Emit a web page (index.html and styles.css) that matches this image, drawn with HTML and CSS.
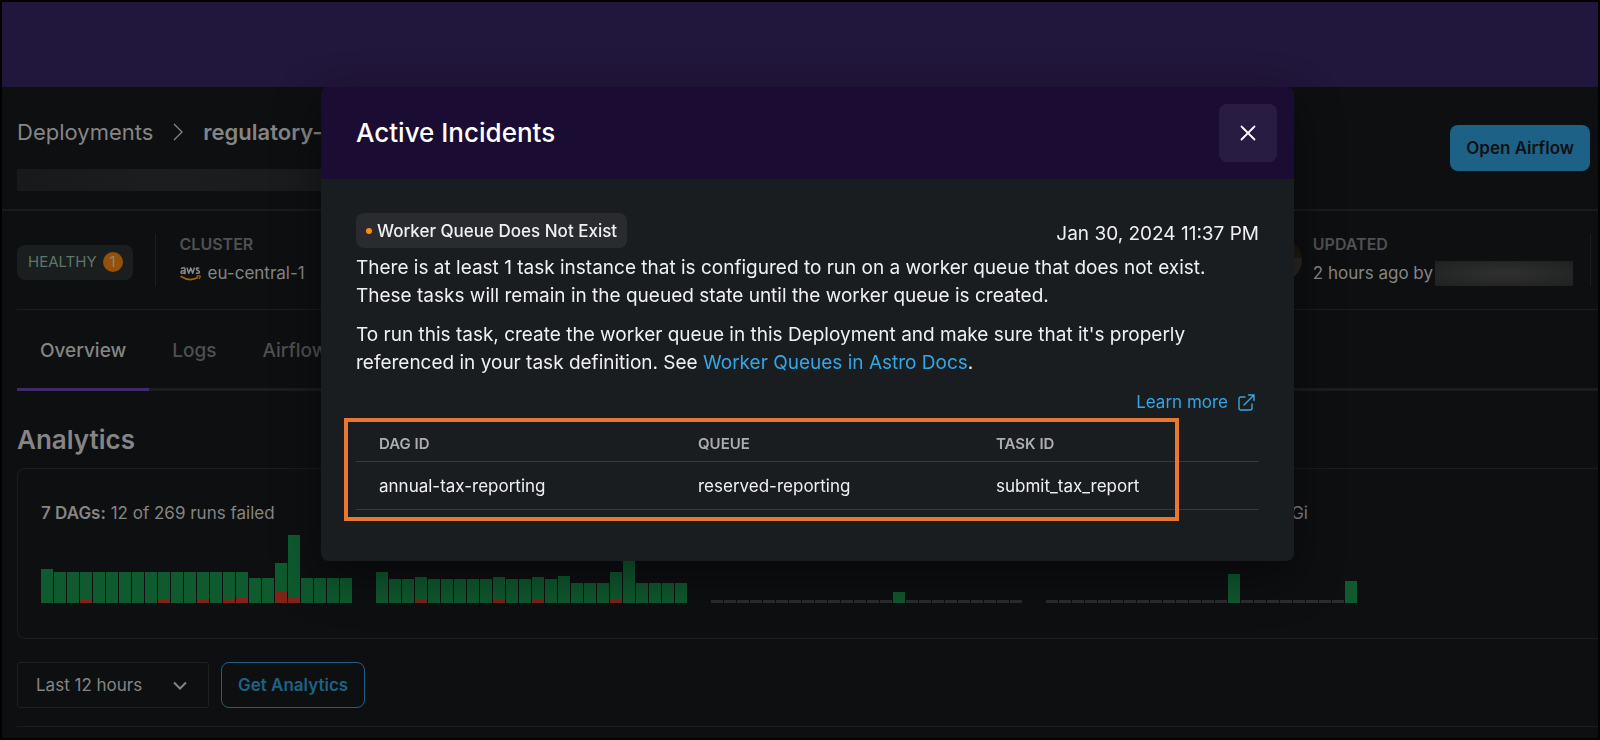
FILE: index.html
```html
<!DOCTYPE html>
<html lang="en">
<head>
<meta charset="utf-8">
<title>Deployment – Active Incidents</title>
<link rel="stylesheet" href="styles.css">
</head>
<body>
<div class="page">
  <header class="topbar"></header>
  <main class="content">
    <section class="heading">
      <div>
        <nav class="breadcrumb">
          <a href="#">Deployments</a>
          <svg width="10" height="18" viewBox="0 0 10 18" fill="none" stroke="currentColor" stroke-width="1.300"><path d="M1 1l8 8-8 8"/></svg>
          <strong>regulatory-reporting</strong>
        </nav>
        <div class="redacted redacted-id"></div>
      </div>
      <button class="btn btn-solid">Open Airflow</button>
    </section>

    <section class="facts">
      <div class="health">HEALTHY <span class="count">1</span></div>
      <div class="fact cluster">
        <div class="label">CLUSTER</div>
        <div class="value">
          <svg class="aws" width="21" height="15" viewBox="0 0 21 15" fill="none">
            <g stroke="#8a8a8a" stroke-width="1.500" stroke-linejoin="round">
              <path d="M1 2.600Q4.900 .8 5 3.200V8.200M5 4.800Q1 4.200 1 6.300Q1.400 8.400 5 6.400"/>
              <path d="M7 1.600L8.700 7.300L10.700 2L12.700 7.300L14.400 1.600"/>
              <path d="M19.300 2.400Q16.300 1.400 16.300 3.100C16.300 4.700 19.500 4.400 19.500 6Q19.300 8 16 7"/>
            </g>
            <path d="M.5 10.300Q9.500 16 18 11.600" stroke="#a06012" stroke-width="1.700"/>
            <path d="M16.500 10.300Q21 9 20.300 10.600T19 13" stroke="#a06012" stroke-width="1.200"/>
          </svg>
          eu-central-1
        </div>
      </div>
      <div class="fact updated">
        <div class="avatar"></div>
        <div>
          <div class="label">UPDATED</div>
          <div class="value">2 hours ago by <span class="redacted redacted-user"></span></div>
        </div>
      </div>
    </section>

    <nav class="tabs">
      <a class="tab active" href="#">Overview</a>
      <a class="tab" href="#">Logs</a>
      <a class="tab" href="#">Airflow</a>
    </nav>

    <h2 class="section-title">Analytics</h2>
    <section class="charts">
      <div class="chart"><p><b>7 DAGs:</b> 12 of 269 runs failed</p><div class="bars" data-series="dags"></div></div>
      <div class="chart"><p></p><div class="bars" data-series="tasks"></div></div>
      <div class="chart"><p></p><div class="bars" data-series="cpu"></div></div>
      <div class="chart"><p class="memory">Gi</p><div class="bars" data-series="memory"></div></div>
    </section>

    <div class="controls">
      <div class="select">
        <select aria-label="Time range"><option>Last 12 hours</option></select>
        <svg width="14" height="9" viewBox="0 0 14 9" fill="none" stroke="currentColor" stroke-width="2"><path d="M1 1.500l6 6 6-6"/></svg>
      </div>
      <button class="btn btn-outline">Get Analytics</button>
    </div>
    <hr class="rule">
  </main>
</div>

<div class="overlay">
  <div class="modal" role="dialog" aria-labelledby="modal-title">
    <header class="modal-head">
      <h1 id="modal-title">Active Incidents</h1>
      <button class="close" aria-label="Close">
        <svg width="16" height="16" viewBox="0 0 16 16" fill="none" stroke="currentColor" stroke-width="1.800" stroke-linecap="round"><path d="M1.500 1.500l13 13M14.500 1.500l-13 13"/></svg>
      </button>
    </header>
    <div class="modal-body">
      <div class="incident-head">
        <span class="badge"><i class="dot"></i>Worker Queue Does Not Exist</span>
        <time>Jan 30, 2024 11:37 PM</time>
      </div>
      <p>There is at least 1 task instance that is configured to run on a worker queue that does not exist. These tasks will remain in the queued state until the worker queue is created.</p>
      <p>To run this task, create the worker queue in this Deployment and make sure that it's properly referenced in your task definition. See <a href="#">Worker Queues in Astro Docs</a>.</p>
      <div class="more">
        <a href="#">Learn more
          <svg width="17" height="17" viewBox="0 0 17 17" fill="none" stroke="currentColor" stroke-width="1.400" stroke-linecap="round" stroke-linejoin="round"><path d="M7 3H3Q1 3 1 5v9Q1 16 3 16h9Q14 16 14 14v-4M6 11L16 1M10.500 1H16v5.500"/></svg>
        </a>
      </div>
      <div class="table-wrap">
        <table>
          <thead><tr><th class="col-dag">DAG ID</th><th class="col-queue">QUEUE</th><th>TASK ID</th></tr></thead>
          <tbody><tr><td>annual-tax-reporting</td><td>reserved-reporting</td><td>submit_tax_report</td></tr></tbody>
        </table>
        <div class="highlight"></div>
      </div>
    </div>
  </div>
</div>
<div class="frame"></div>
<script src="charts.js"></script>
</body>
</html>
```
FILE: styles.css
```css
* { box-sizing: border-box; }
body {
  margin: 0;
  min-height: 100vh;
  background: #0e0f11;
  color: #858585;
  font: 17px/24px Inter, "Liberation Sans", sans-serif;
  overflow: hidden;
}
h1, h2, p { margin: 0; }
a { color: inherit; text-decoration: none; }
button, select { font: inherit; color: inherit; }
svg { flex: none; }
.frame { position: fixed; inset: 0; border: 2px solid #000; pointer-events: none; }
.topbar { height: 87px; background: #21163b; }
.content { padding-left: 17px; }

.heading {
  display: flex;
  justify-content: space-between;
  align-items: flex-start;
  height: 124px;
  margin-left: -17px;
  padding: 31px 10px 0 17px;
  border-bottom: 2px solid #1a1b1c;
}
.breadcrumb { display: flex; align-items: center; gap: 20px; font-size: 22px; line-height: 28px; }
.breadcrumb strong { font-weight: 600; }
.redacted { background: #1b1c1e; }
.redacted-id { width: 340px; height: 22px; margin-top: 23px; background: linear-gradient(90deg, #18191b, #1c1d1f 40%, #1a1b1d); }
.btn { height: 46px; padding: 0 16px; border-radius: 8px; font-weight: 600; }
.btn-solid { margin-top: 7px; border: 0; background: #1d6286; color: #0e1113; }
.btn-outline { border: 1px solid #1d6286; background: none; color: #1d6286; }

.facts { display: flex; align-items: center; height: 99px; border-bottom: 1px solid #1c1d1e; }
.health {
  display: flex;
  align-items: center;
  gap: 6px;
  height: 35px;
  margin-top: 4px;
  padding: 0 10px 0 11px;
  border-radius: 8px;
  background: #1a1e1f;
  color: #5d776b;
  font-size: 15px;
}
.count {
  width: 20px;
  height: 20px;
  border-radius: 50%;
  background: #95500a;
  color: #8a8a70;
  line-height: 20px;
  text-align: center;
}
.fact { height: 52px; }
.cluster { margin-left: 22px; padding-left: 24px; border-left: 1px solid #1c1d1e; }
.label { height: 22px; line-height: 20px; color: #505152; font-size: 16px; font-weight: 600; }
.value { display: flex; align-items: center; gap: 7px; height: 34px; }
.updated { display: flex; gap: 11px; margin-left: auto; margin-right: 9px; padding-right: 17px; border-right: 1px solid #1c1d1e; }
.updated .value { gap: 2px; }
.avatar { width: 42px; height: 42px; margin-top: 5px; border-radius: 50%; background: linear-gradient(#1e1914 44%, #2f261c 46%, #292724 50%, #292724); }
.redacted-user { width: 138px; height: 25px; background: radial-gradient(#303030, #1f2020); }

.tabs { display: flex; height: 81px; border-bottom: 3px solid #1c1d1f; }
.tab { height: 81px; padding: 0 23px; color: #4e4f50; font-size: 19px; line-height: 82px; font-weight: 500; }
.tab.active { color: #858585; border-bottom: 3px solid #3f2b6b; }
.section-title { padding: 33px 0 12px; font-size: 26px; line-height: 32px; font-weight: 600; }

.charts {
  display: grid;
  grid-template-columns: repeat(4, 311px);
  gap: 24px;
  height: 171px;
  padding: 32px 0 0 23px;
  border: 1px solid #1c1d1e;
  border-right: 0;
  border-radius: 8px 0 0 8px;
}
.chart p { height: 24px; font-size: 17px; }
.chart b { font-weight: 600; }
.chart .memory { width: 262px; text-align: right; }
.bars { display: flex; align-items: flex-end; gap: 1px; height: 78px; }
.bar { flex: 1; display: flex; align-items: flex-end; background: #0f5a2f; }
.bar.empty { background: #2d2d2e; }
.failed { flex: 1; background: #812318; }

.controls { display: flex; gap: 12px; margin-top: 23px; }
.select { display: grid; width: 192px; align-items: center; }
.select select, .select svg { grid-area: 1 / 1; }
.select svg { justify-self: end; margin-right: 22px; pointer-events: none; }
.select select { appearance: none; height: 46px; padding: 0 18px; border: 1px solid #1f2021; border-radius: 3px; background: none; }
.rule { margin: 18px 0 0; border: 0; border-top: 1px solid #1c1d1e; }

.overlay { position: fixed; inset: 0; padding: 87px 0 0 15px; color: #f0f0f2; }
.modal {
  width: 973px;
  max-width: 100%;
  margin: 0 auto;
  border-radius: 8px;
  background: #1a1d1f;
  box-shadow: 0 16px 48px rgba(0, 0, 0, .45);
}
.modal-head {
  display: flex;
  align-items: center;
  justify-content: space-between;
  height: 92px;
  padding: 0 17px 0 35px;
  border-radius: 8px 8px 0 0;
  background: #1b0c34;
  color: #fff;
}
.modal-head h1 { font-size: 26px; line-height: 32px; font-weight: 500; }
.close { display: grid; place-items: center; width: 58px; height: 58px; border: 0; border-radius: 8px; background: #291c43; }
.modal-body { padding: 34px 35px 51px; font-size: 19px; line-height: 28px; }
.modal-body a { color: #34a6e6; }
.incident-head { display: flex; justify-content: space-between; height: 41px; }
.badge { display: flex; align-items: center; gap: 5px; height: 35px; padding: 0 10px; border-radius: 8px; background: #2a2b2e; font-size: 17px; font-weight: 500; }
.dot { width: 6px; height: 6px; border-radius: 50%; background: #ff8c0a; }
time { line-height: 41px; }
.modal-body p { margin-bottom: 11px; }
.more { display: flex; justify-content: flex-end; padding-right: 4px; font-size: 17px; }
.more a { display: flex; align-items: center; gap: 10px; }
.table-wrap { position: relative; }
table { width: 100%; border-collapse: collapse; table-layout: fixed; }
th, td { padding: 0 0 0 23px; border-bottom: 1px solid #3a3a3d; text-align: left; }
th { height: 45px; padding-top: 11px; color: #adadb0; font-size: 15px; font-weight: 600; }
td { height: 48px; padding-top: 2px; font-size: 17px; }
.col-dag { width: 319px; }
.col-queue { width: 298px; }
.highlight { position: absolute; top: 2px; left: -12px; width: 835px; height: 103px; border: 4px solid #e87830; }
```
FILE: charts.js
```js
const fill = (n, value) => Array(n).fill(value);
const series = {
  dags: {
    totals: [34, ...fill(15, 31), 25, 25, 40, 68, ...fill(4, 25)],
    failed: { 3: 3, 9: 3, 12: 3, 14: 3, 15: 5, 18: 11, 19: 5 }
  },
  tasks: {
    totals: [31, 24, 24, 26, ...fill(5, 24), 26, 24, 24, 26, 24, 27, 20, 20, 20, 31, 58, ...fill(4, 20)],
    failed: { 3: 3, 9: 3, 12: 3, 18: 3 }
  },
  cpu: { totals: [...fill(14, 0), 11, ...fill(9, 0)], failed: {} },
  memory: { totals: [...fill(14, 0), 29, ...fill(8, 0), 22], failed: {} }
};

document.querySelectorAll('.bars').forEach(chart => {
  const { totals, failed } = series[chart.dataset.series];
  totals.forEach((total, i) => {
    const bar = document.createElement('div');
    bar.className = total ? 'bar' : 'bar empty';
    bar.style.height = (total || 3) + 'px';
    if (failed[i]) {
      const part = document.createElement('div');
      part.className = 'failed';
      part.style.height = failed[i] + 'px';
      bar.append(part);
    }
    chart.append(bar);
  });
});
```
